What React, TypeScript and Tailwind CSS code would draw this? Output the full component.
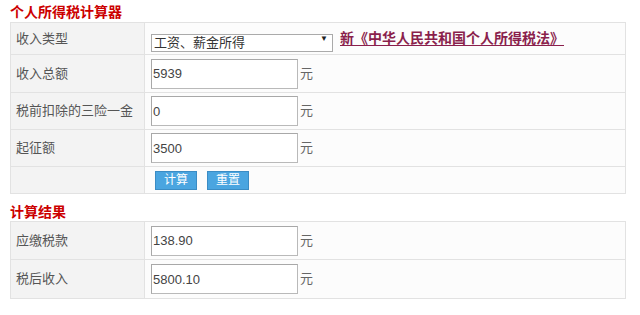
import { useState } from 'react';

const font = { fontFamily: '"Liberation Sans", "Noto Sans CJK SC", sans-serif' };

function Row({ label, h, children }: { label: string; h: string; children?: React.ReactNode }) {
    return (
        <div className={`flex border-b border-[#e2e2e2] last:border-b-0 ${h}`}>
            <div className="w-[134px] shrink-0 bg-[#f3f3f3] border-r border-[#e2e2e2] flex items-center pl-[5px] text-[13px] text-[#555]">
                {label}
            </div>
            <div className="flex-1 bg-[#fcfcfc] flex items-center pl-[6px]">{children}</div>
        </div>
    );
}

function Field({ value }: { value: string }) {
    return (
        <>
            <input
                readOnly
                value={value}
                className="w-[147px] h-[30px] border border-[#b9b9b9] border-t-[#a8a8a8] border-l-[#a8a8a8] bg-white px-[1px] text-[13px] text-[#444] outline-none"
            />
            <span className="ml-[2px] text-[13px] text-[#666]">元</span>
        </>
    );
}

export default function App() {
    const [kind, setKind] = useState('工资、薪金所得');

    return (
        <div className="w-[640px] h-[315px] bg-white pl-[10px]" style={font}>
            <div className="h-[22px] pt-[3px] text-[14px] font-bold text-[#c00] leading-[18px]">个人所得税计算器</div>
            <div className="w-[616px] border border-[#e2e2e2]">
                <Row label="收入类型" h="h-[32px]">
                    <div className="relative w-[182px] h-[18px]">
                        <select
                            value={kind}
                            onChange={e => setKind(e.target.value)}
                            className="appearance-none w-full h-full border border-[#aaa] bg-white pl-[2px] text-[13px] leading-[16px] text-[#333] outline-none"
                        >
                            <option>工资、薪金所得</option>
                            <option>个体工商户生产经营所得</option>
                            <option>劳务报酬所得</option>
                        </select>
                        <span className="absolute right-[5px] top-[3px] text-[8px] text-[#222] pointer-events-none">▼</span>
                    </div>
                    <a href="#" className="ml-[7px] text-[14px] font-bold text-[#8a1f4c] underline underline-offset-2">
                        新《中华人民共和国个人所得税法》
                    </a>
                </Row>
                <Row label="收入总额" h="h-[38px]"><Field value="5939" /></Row>
                <Row label="税前扣除的三险一金" h="h-[37px]"><Field value="0" /></Row>
                <Row label="起征额" h="h-[37px]"><Field value="3500" /></Row>
                <Row label="" h="h-[26px]">
                    <div className="flex gap-[10px] ml-[4px]">
                        <button className="w-[42px] h-[19px] bg-[#4aa5e0] border border-[#3b8cc4] text-white text-[12px] leading-none">计算</button>
                        <button className="w-[42px] h-[19px] bg-[#4aa5e0] border border-[#3b8cc4] text-white text-[12px] leading-none">重置</button>
                    </div>
                </Row>
            </div>
            <div className="h-[27px] pt-[9px] text-[14px] font-bold text-[#c00] leading-[18px]">计算结果</div>
            <div className="w-[616px] border border-[#e2e2e2]">
                <Row label="应缴税款" h="h-[38px]"><Field value="138.90" /></Row>
                <Row label="税后收入" h="h-[38px]"><Field value="5800.10" /></Row>
            </div>
        </div>
    );
}
